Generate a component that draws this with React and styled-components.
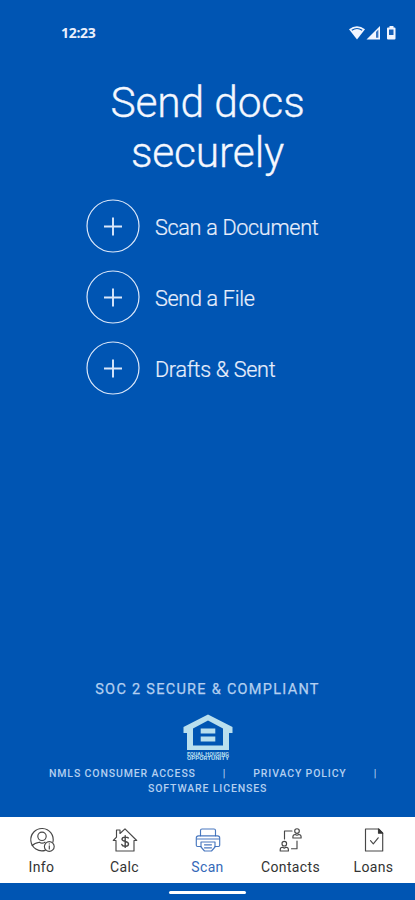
import styled, {createGlobalStyle, ThemeProvider} from 'styled-components'

const theme = {
  colors: {
    background: '#0055b3',
    text: '#e9effc',
    muted: '#b3cff0',
    active: '#3569b8',
    label: '#333333',
  },
}

const GlobalStyle = createGlobalStyle`
  * {
    box-sizing: border-box;
  }

  body {
    margin: 0;
    font-family: Roboto, sans-serif;
    background: ${theme.colors.background};
  }
`

const Screen = styled.div`
  width: 415px;
  height: 900px;
  display: flex;
  flex-direction: column;
  overflow: hidden;
  background: ${({theme}) => theme.colors.background};
`

const StatusBar = styled.header`
  height: 65px;
  padding: 0 18px 0 61px;
  display: flex;
  justify-content: space-between;
  align-items: center;
`

const Time = styled.span`
  font-family: 'Open Sans', sans-serif;
  font-size: 14px;
  font-weight: 700;
  letter-spacing: -0.3px;
  color: ${({theme}) => theme.colors.text};
`

const Main = styled.main`
  flex: 1;
  display: flex;
  flex-direction: column;
  align-items: center;
`

const Title = styled.h1`
  margin: 13px 0 0;
  font-size: 42.5px;
  line-height: 50px;
  font-weight: 300;
  letter-spacing: -0.15px;
  text-align: center;
  color: #f4f7fe;
  -webkit-text-stroke: 0.3px #f4f7fe;
`

const Actions = styled.div`
  width: 100%;
  margin-top: 21px;
  padding-left: 86px;
  display: flex;
  flex-direction: column;
  gap: 17px;
`

const Action = styled.button`
  height: 54px;
  padding: 0;
  border: none;
  background: none;
  display: flex;
  align-items: center;
  gap: 15px;
  font-family: inherit;
  font-size: 21.6px;
  font-weight: 300;
  letter-spacing: -0.3px;
  color: ${({theme}) => theme.colors.text};
  cursor: pointer;
`

const ActionLabel = styled.span`
  padding-top: 3px;
  -webkit-text-stroke: 0.2px ${({theme}) => theme.colors.text};
`

const Footer = styled.footer`
  margin-top: auto;
  display: flex;
  flex-direction: column;
  align-items: center;
  color: ${({theme}) => theme.colors.muted};
`

const Compliance = styled.p`
  margin: 0 0 16px;
  font-size: 14.5px;
  line-height: 16px;
  letter-spacing: 1.28px;
  -webkit-text-stroke: 0.25px ${({theme}) => theme.colors.muted};
`

const Links = styled.div`
  width: 100%;
  margin-top: 4px;
  padding-bottom: 21px;
  font-size: 10.5px;
  line-height: 15px;
  font-weight: 500;
  letter-spacing: 0.86px;
`

const LinkRow = styled.div`
  display: flex;
  align-items: center;
  padding-left: ${({$indent}) => $indent}px;
`

const Separator = styled.span`
  margin: 0 ${({$after}) => $after || 0}px 0 27px;
`

const TabBar = styled.nav`
  height: 66px;
  display: grid;
  grid-template-columns: repeat(5, 1fr);
  background: #ffffff;
`

const Tab = styled.button`
  border: none;
  padding: 9px 0 0;
  background: none;
  display: flex;
  flex-direction: column;
  align-items: center;
  gap: 5px;
  font-family: inherit;
  font-size: 14px;
  line-height: 16px;
  letter-spacing: 0.35px;
  white-space: nowrap;
  color: ${({theme, $active}) =>
    $active ? theme.colors.active : theme.colors.label};
  cursor: pointer;
`

const HomeArea = styled.div`
  height: 17px;
  display: flex;
  justify-content: center;
  padding-top: 8px;
`

const HomeHandle = styled.div`
  width: 77px;
  height: 3px;
  border-radius: 2px;
  background: #ffffff;
`

const TabSvg = ({children}) => (
  <svg
    width="28"
    height="28"
    viewBox="0 0 28 28"
    fill="none"
    stroke="currentColor"
    strokeWidth="1.15"
    strokeOpacity="0.9"
    strokeLinecap="round"
    strokeLinejoin="round"
  >
    {children}
  </svg>
)

const StatusIcons = () => (
  <svg width="48" height="18" viewBox="0 0 48 18" fill="#f1f5ff">
    <path d="M0 5.200Q8-.8 16 5.200L8 15.500Z" />
    <path d="M2.800 6.300Q8 2.700 13.200 6.300" fill="none" stroke="#0055b3" strokeWidth="1.200" />
    <path d="M17.500 15.500L31 2V15.500Z" />
    <path d="M27 8L29.400 5.500V13.800H27Z" fill="#3975c3" />
    <path d="M40.500 2H44.500V3.500H45.500Q46.500 3.500 46.500 4.500V14.500Q46.500 15.500 45.500 15.500H39Q38 15.500 38 14.500V4.500Q38 3.500 39 3.500H40.500Z" />
    <path d="M40 5.500H44.500V11H40Z" fill="#1761b8" />
  </svg>
)

const PlusIcon = () => (
  <svg width="54" height="54" viewBox="0 0 54 54" fill="none" stroke="#dce8fa">
    <circle cx="27" cy="27" r="26" strokeWidth="1.2" />
    <path d="M18 27.500H36M27 18.500V36.500" strokeWidth="1.9" />
  </svg>
)

const HousingLogo = () => (
  <svg width="50" height="48" viewBox="-1 0 50 48" fill="#b9dfee">
    <path
      fillRule="evenodd"
      d="M24 .5L48.500 13V19H45V36H3V19H-.5V13ZM24 6.500L9 14.500V31.500H39V14.500Z"
    />
    <path d="M16.700 14.500H31.300V19.400H16.700ZM16.700 22.500H31.300V27.400H16.700Z" />
    <text
      x="3"
      y="41.500"
      fontSize="4.700"
      fontWeight="700"
      textLength="42"
      lengthAdjust="spacingAndGlyphs"
    >
      EQUAL HOUSING
    </text>
    <text
      x="3"
      y="46.300"
      fontSize="5"
      fontWeight="700"
      textLength="42"
      lengthAdjust="spacingAndGlyphs"
    >
      OPPORTUNITY
    </text>
  </svg>
)

const InfoIcon = () => (
  <TabSvg>
    <path d="M17.200 24.400A11.200 11.200 0 1 1 24.900 16.200" />
    <circle cx="14" cy="10.300" r="4.200" />
    <path d="M4.200 19.500C6.200 17.300 8.500 16.700 11.500 16.200Q14 18.200 17 16.200" />
    <circle cx="21.300" cy="20.500" r="4.900" />
    <path d="M21.300 19.900V23M21.300 17.800V18" />
  </TabSvg>
)

const CalcIcon = () => (
  <TabSvg>
    <path d="M5 25V14.500H2.300L5.500 11.200V4H9V7.500L14 2.800L25.700 14.500H23V25Z" />
    <path
      d="M17.300 12C16.500 10.800 11 10.500 11 13.300C11 16 17.500 14.800 17.500 17.900C17.500 20.900 11.500 20.800 10.800 18.500M14.200 9.800V21.400"
      strokeWidth="1.400"
    />
  </TabSvg>
)

const ScanIcon = () => (
  <TabSvg>
    <path d="M6.500 9.700V4.500Q6.500 3 8 3H20Q21.500 3 21.500 4.500V9.700" />
    <path d="M7 20.500H3.500Q2.300 20.500 2.300 19.300V12Q2.300 9.800 4.500 9.800H23.500Q25.700 9.800 25.700 12V19.300Q25.700 20.500 24.500 20.500H21" />
    <path d="M3 13H25M7 16H21V21L17.500 25H10.500L7 21ZM10.500 18.800H17.500M10.500 21.800H17.500" />
  </TabSvg>
)

const ContactsIcon = () => (
  <TabSvg>
    <circle cx="20" cy="5" r="2.300" />
    <path d="M15.900 12V10.800Q15.900 8.700 18.200 8.500L20 9.300L21.800 8.500Q24.100 8.700 24.100 10.800V12Z" />
    <circle cx="7.300" cy="17.700" r="2.300" />
    <path d="M3.200 25V23.700Q3.200 21.500 5.500 21.300L7.300 22.100L9.100 21.300Q11.400 21.500 11.400 23.700V25Z" />
    <path d="M15 5H7.500V13M20 15V22.700H14.500" />
  </TabSvg>
)

const LoansIcon = () => (
  <TabSvg>
    <path d="M5.500 3H18.500L22.700 7.200V25H5.500Z" />
    <path d="M18.500 3V7.200H22.700Z" fill="currentColor" />
    <path d="M10.500 14.700L13.300 17.800L18.200 11.800" />
  </TabSvg>
)

const actions = ['Scan a Document', 'Send a File', 'Drafts & Sent']

const tabs = [
  {label: 'Info', Icon: InfoIcon},
  {label: 'Calc', Icon: CalcIcon},
  {label: 'Scan', Icon: ScanIcon, active: true},
  {label: 'Contacts', Icon: ContactsIcon},
  {label: 'Loans', Icon: LoansIcon},
]

const App = () => (
  <ThemeProvider theme={theme}>
    <GlobalStyle />
    <Screen>
      <StatusBar>
        <Time>12:23</Time>
        <StatusIcons />
      </StatusBar>

      <Main>
        <Title>
          Send docs
          <br />
          securely
        </Title>
        <Actions>
          {actions.map(label => (
            <Action key={label} type="button">
              <PlusIcon />
              <ActionLabel>{label}</ActionLabel>
            </Action>
          ))}
        </Actions>
      </Main>

      <Footer>
        <Compliance>SOC 2 SECURE &amp; COMPLIANT</Compliance>
        <HousingLogo />
        <Links>
          <LinkRow $indent={49}>
            <span>NMLS CONSUMER ACCESS</span>
            <Separator $after={27}>|</Separator>
            <span>PRIVACY POLICY</span>
            <Separator>|</Separator>
          </LinkRow>
          <LinkRow $indent={148}>
            <span>SOFTWARE LICENSES</span>
          </LinkRow>
        </Links>
      </Footer>

      <TabBar>
        {tabs.map(({label, Icon, active}) => (
          <Tab key={label} type="button" $active={active}>
            <Icon />
            {label}
          </Tab>
        ))}
      </TabBar>
      <HomeArea>
        <HomeHandle />
      </HomeArea>
    </Screen>
  </ThemeProvider>
)

export default App
